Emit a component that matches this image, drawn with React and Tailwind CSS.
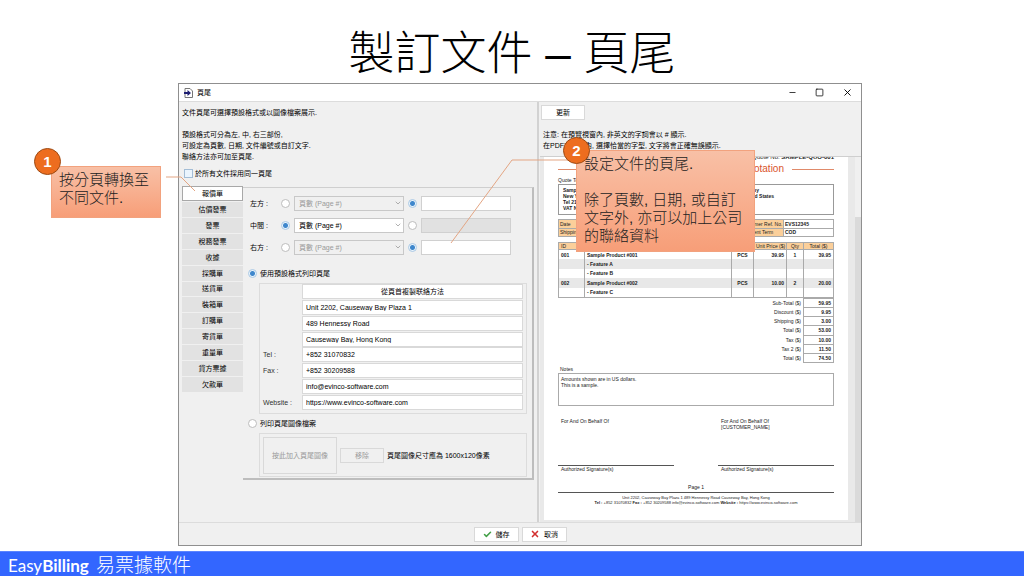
import React, { useState } from "react";
import { Check, ChevronDown, Minus, Square, X } from "lucide-react";

const tabs = [
  "報價單",
  "估價發票",
  "發票",
  "稅務發票",
  "收據",
  "採購單",
  "送貨單",
  "裝箱單",
  "訂購單",
  "寄貨單",
  "重量單",
  "貸方票據",
  "欠款單",
];

const positions = [
  { id: "left", label: "左方 :", mode: "text" },
  { id: "center", label: "中間 :", mode: "field" },
  { id: "right", label: "右方 :", mode: "text" },
];

const contactRows = [
  { id: "addr1", label: "", value: "Unit 2202, Causeway Bay Plaza 1" },
  { id: "addr2", label: "", value: "489 Hennessy Road" },
  { id: "addr3", label: "", value: "Causeway Bay, Hong Kong" },
  { id: "tel", label: "Tel :", value: "+852 31070832" },
  { id: "fax", label: "Fax :", value: "+852 30209588" },
  { id: "email", label: "", value: "info@evinco-software.com" },
  { id: "web", label: "Website :", value: "https://www.evinco-software.com" },
];

const items = [
  ["001", "Sample Product #001", "PCS", "39.95", "1", "39.95"],
  ["", "- Feature A", "", "", "", ""],
  ["", "- Feature B", "", "", "", ""],
  ["002", "Sample Product #002", "PCS", "10.00", "2", "20.00"],
  ["", "- Feature C", "", "", "", ""],
];

const totals = [
  ["Sub-Total ($)", "59.95"],
  ["Discount ($)", "9.95"],
  ["Shipping ($)", "3.00"],
  ["Total ($)", "53.00"],
  ["Tax ($)", "10.00"],
  ["Tax 2 ($)", "11.50"],
  ["Total ($)", "74.50"],
];

const Radio = ({ className = "", ...props }) => (
  <input
    type="radio"
    className={`appearance-none shrink-0 size-[9px] rounded-full border border-[#bdbdbd] bg-white checked:border-[#a9c8e4] checked:bg-[radial-gradient(circle,#3f87cc_0_2px,#eaf4fc_3px)] ${className}`}
    {...props}
  />
);

const PushButton = ({ className = "", children, ...props }) => (
  <button
    type="button"
    className={`flex items-center justify-center gap-1 border border-[#d9d9d9] bg-white disabled:bg-[#f0f0f0] disabled:text-[#9a9a9a] ${className}`}
    {...props}>
    {children}
  </button>
);

const PositionRow = ({ id, label, mode: initial }) => {
  const [mode, setMode] = useState(initial);

  return (
    <div className="flex items-center h-[22px]">
      <span id={`${id}-label`} className="w-[31px]">
        {label}
      </span>
      <Radio
        name={`${id}-mode`}
        aria-label={`${label} 頁數`}
        checked={mode === "field"}
        onChange={() => setMode("field")}
      />
      <div className="grid items-center w-[110px] ml-1">
        <select
          aria-labelledby={`${id}-label`}
          disabled={mode !== "field"}
          className="appearance-none col-start-1 row-start-1 h-[15px] w-full px-1 border border-[#c8c8c8] bg-white disabled:bg-[#f0f0f0] disabled:text-[#9a9a9a] disabled:opacity-100">
          <option>頁數 (Page #)</option>
        </select>
        <ChevronDown
          size={8}
          strokeWidth={2}
          className="col-start-1 row-start-1 justify-self-end mr-[2px] text-[#8a8a8a] pointer-events-none"
        />
      </div>
      <Radio
        name={`${id}-mode`}
        aria-label={`${label} 自訂文字`}
        className="ml-1"
        checked={mode === "text"}
        onChange={() => setMode("text")}
      />
      <input
        type="text"
        aria-label={`${label} 文字`}
        disabled={mode !== "text"}
        className="w-[90px] h-[15px] ml-1 px-1 border border-[#d0d0d0] bg-white disabled:bg-[#e1e1e1]"
      />
    </div>
  );
};

const FooterSettings = () => {
  const [format, setFormat] = useState("default");

  return (
    <div className="flex-1 min-w-0 h-[293px] mt-px pl-[5px] pr-1 pt-1 border-t border-t-[#cfcfcf] border-r-2 border-b-2 border-r-[#bdbdbd] border-b-[#bdbdbd]">
      <div className="pl-[2px]">
        {positions.map((p) => (
          <PositionRow key={p.id} {...p} />
        ))}
      </div>

      <label className="flex items-center gap-[3px] h-[11px] mt-[10px]">
        <Radio
          name="format"
          checked={format === "default"}
          onChange={() => setFormat("default")}
        />
        使用預設格式列印頁尾
      </label>
      <div className="grid auto-rows-fr h-[131px] mt-1 ml-[11px] mr-px border border-[#dcdcdc] pb-[3px] pr-[3px]">
        <div className="flex items-center">
          <PushButton className="flex-1 h-[15px] ml-[42px]">
            從頁首複製联絡方法
          </PushButton>
        </div>
        {contactRows.map((row) => (
          <div key={row.id} className="flex items-center">
            <label htmlFor={row.id} className="w-[42px] pl-[3px] text-[#333]">
              {row.label}
            </label>
            <input
              id={row.id}
              type="text"
              defaultValue={row.value}
              className="flex-1 min-w-0 h-[15px] px-[3px] border border-[#d9d9d9] bg-white"
            />
          </div>
        ))}
      </div>

      <label className="flex items-center gap-[3px] h-[11px] mt-1">
        <Radio
          name="format"
          checked={format === "image"}
          onChange={() => setFormat("image")}
        />
        列印頁尾圖像檔案
      </label>
      <div className="flex items-center gap-[3px] h-[44px] mt-1 ml-[11px] mr-px pl-[3px] border border-[#dcdcdc]">
        <PushButton disabled={format !== "image"} className="w-[74px] h-[37px]">
          按此加入頁尾圖像
        </PushButton>
        <PushButton disabled={format !== "image"} className="w-[44px] h-[15px]">
          移除
        </PushButton>
        <span>頁尾圖像尺寸應為 1600x120像素</span>
      </div>
    </div>
  );
};

const cellAlign = [
  "text-left",
  "text-left",
  "text-center",
  "text-right",
  "text-center",
  "text-right",
];

const InvoicePreview = () => (
  <div className="flex-1 min-w-0 h-[363px] bg-white px-[14px] text-[5px] leading-[6px] text-[#222] overflow-hidden">
    <p className="-mt-[3px] text-right text-[6px]">
      Quote No. <b>SAMPLE-QUO-001</b>
    </p>
    <div className="flex items-center gap-2 h-[14px] mt-[2px] text-[10px] text-[#d9542c]">
      <span className="flex-1 h-px bg-[#e08a6a]"></span>
      Quotation
      <span className="w-[42px] h-px bg-[#e08a6a]"></span>
    </div>
    <p className="mt-px">Quote To</p>
    <div className="grid grid-cols-[154px_1fr] h-[31px] mt-px px-1 pt-[2px] border border-[#999] font-bold">
      <p>
        Sample
        <br />
        New York
        <br />
        Tel 212
        <br />
        VAT No.
      </p>
      <p>
        Sample Company
        <br />
        New York, United States
      </p>
    </div>

    <table className="w-full h-[18px] mt-1 table-fixed border-collapse [&_th]:bg-[#fbcf9a] [&_th]:font-normal [&_th]:text-left [&_th]:whitespace-nowrap [&_th]:border [&_td]:border [&_th]:border-[#aaa] [&_td]:border-[#aaa] [&_td]:px-px [&_th]:px-px">
      <colgroup>
        <col className="w-[50px]" />
        <col />
        <col className="w-[44px]" />
        <col className="w-[50px]" />
      </colgroup>
      <tbody>
        <tr>
          <th scope="row">Date</th>
          <td></td>
          <th scope="row">Customer Ref. No.</th>
          <td className="font-bold">EVS12345</td>
        </tr>
        <tr>
          <th scope="row">Shipping</th>
          <td></td>
          <th scope="row">Payment Term</th>
          <td className="font-bold">COD</td>
        </tr>
      </tbody>
    </table>

    <table className="w-full h-[56px] mt-[5px] table-fixed border-collapse border border-[#aaa] [&_td]:border-x [&_td]:border-[#aaa] [&_td]:px-[2px] [&_th]:px-[2px]">
      <colgroup>
        <col className="w-[26px]" />
        <col />
        <col className="w-[22px]" />
        <col className="w-[33px]" />
        <col className="w-[17px]" />
        <col className="w-[30px]" />
      </colgroup>
      <thead>
        <tr className="bg-[#fbcf9a] [&_th]:border [&_th]:border-[#aaa] [&_th]:font-normal [&_th]:whitespace-nowrap">
          <th className="text-left">ID</th>
          <th className="text-left">Description</th>
          <th>Unit</th>
          <th>Unit Price ($)</th>
          <th>Qty</th>
          <th>Total ($)</th>
        </tr>
      </thead>
      <tbody>
        {items.map((row, i) => (
          <tr key={i} className="font-bold even:bg-[#e8e8e8]">
            {row.map((cell, c) => (
              <td key={c} className={`h-[9px] ${cellAlign[c]}`}>
                {cell}
              </td>
            ))}
          </tr>
        ))}
      </tbody>
    </table>
    <table className="w-full h-[65px] table-fixed border-collapse">
      <colgroup>
        <col />
        <col className="w-[30px]" />
      </colgroup>
      <tbody>
        {totals.map(([name, amount], i) => (
          <tr key={i}>
            <th scope="row" className="pr-[2px] text-right font-normal">
              {name}
            </th>
            <td className="px-[2px] border border-[#aaa] text-right font-bold">
              {amount}
            </td>
          </tr>
        ))}
      </tbody>
    </table>

    <p className="mt-[3px] pl-[2px]">Notes</p>
    <div className="h-[33px] mt-px p-[2px] border border-[#aaa]">
      Amounts shown are in US dollars.
      <br />
      This is a sample.
    </div>
    <div className="grid grid-cols-[116px_116px] justify-between mt-3">
      <div className="h-[48px] px-[3px] border-b border-[#555]">
        For And On Behalf Of
      </div>
      <div className="h-[48px] px-[3px] border-b border-[#555]">
        For And On Behalf Of
        <br />
        [CUSTOMER_NAME]
      </div>
      <p className="px-[3px]">Authorized Signature(s)</p>
      <p className="px-[3px]">Authorized Signature(s)</p>
    </div>
    <p className="mt-3 pb-[2px] border-b border-[#555] text-center">Page 1</p>
    <div className="mt-[2px] text-center text-[4px] leading-[5px] whitespace-nowrap">
      <p>
        Unit 2202, Causeway Bay Plaza 1 489 Hennessy Road Causeway Bay, Hong
        Kong
      </p>
      <p>
        <b>Tel :</b> +852 31070832 <b>Fax :</b> +852 30209588
        info@evinco-software.com <b>Website :</b>{" "}
        https://www.evinco-software.com
      </p>
    </div>
  </div>
);

const FooterDialog = () => {
  const [active, setActive] = useState(tabs[0]);

  return (
    <section className="flex flex-col ml-[178px] mr-[162px] border border-[#8f8f8f] bg-[#f0f0f0] text-[7px] leading-[11px] text-black">
      <header className="flex items-center h-[17px] pl-[5px] pr-2 bg-white">
        <svg viewBox="0 0 18 20" className="w-[9px] h-[10px]">
          <path d="M2 1h10l5 5v13H2z" fill="#fff" stroke="#777" strokeWidth="2" />
          <path d="M0 8h7V4l7 6-7 6v-4H0z" fill="#1d1d70" />
        </svg>
        <h2 className="flex-1 ml-1">頁尾</h2>
        <div className="flex gap-[18px]">
          <button type="button" aria-label="最小化">
            <Minus size={9} />
          </button>
          <button type="button" aria-label="最大化">
            <Square size={9} />
          </button>
          <button type="button" aria-label="關閉">
            <X size={11} />
          </button>
        </div>
      </header>

      <div className="flex h-[422px] border-y border-[#dcdcdc]">
        <div className="w-[360px] pl-[3px] pr-[3px] pt-[5px] border-r-2 border-[#d2d2d2]">
          <p>文件頁尾可選擇預設格式或以圖像檔案展示.</p>
          <p className="mt-[11px]">
            預設格式可分為左, 中, 右三部份,
            <br />
            可設定為頁數, 日期, 文件編號或自訂文字.
            <br />
            聯絡方法亦可加至頁尾.
          </p>
          <label className="flex items-center gap-[2px] mt-[6px] pl-[2px]">
            <input
              type="checkbox"
              className="appearance-none size-[9px] border border-[#a3bdd6] bg-[#eaf4fd] checked:bg-[#3f87cc]"
            />
            於所有文件採用同一頁尾
          </label>
          <div className="flex mt-[7px]">
            <div
              role="tablist"
              className="grid auto-rows-fr gap-px w-[61px] h-[206px]">
              {tabs.map((tab) => (
                <button
                  key={tab}
                  type="button"
                  role="tab"
                  aria-selected={tab === active}
                  onClick={() => setActive(tab)}
                  className={
                    tab === active
                      ? "bg-white border border-[#a8a8a8]"
                      : "bg-[#e2e2e2]"
                  }>
                  {tab}
                </button>
              ))}
            </div>
            <FooterSettings />
          </div>
        </div>

        <div className="flex-1 min-w-0 flex flex-col pl-px">
          <PushButton className="w-[44px] h-[15px] mt-[3px] ml-px">更新</PushButton>
          <p className="mt-[9px] ml-[3px]">
            注意: 在預覽視窗內, 非英文的字詞會以 # 顯示.
            <br />
            在PDF文件檔內, 選擇恰當的字型, 文字將會正確無誤顯示.
          </p>
          <div className="flex flex-1 min-h-0 mt-[5px] pl-1 border-t border-[#cfcfcf] bg-[#e9e9e9]">
            <InvoicePreview />
            <div className="w-[7px]"></div>
            <div className="w-[6px] bg-[#f0f0f0] pt-[60px]">
              <div className="h-full bg-[#dadada]"></div>
            </div>
          </div>
        </div>
      </div>

      <footer className="flex justify-center items-center gap-[3px] h-[22px]">
        <PushButton className="w-[45px] h-[15px]">
          <Check size={9} strokeWidth={4} className="text-[#43a047]" />
          儲存
        </PushButton>
        <PushButton className="w-[45px] h-[15px]">
          <X size={10} strokeWidth={4} className="text-[#d32f2f]" />
          取消
        </PushButton>
      </footer>
    </section>
  );
};

const Callout = ({ number, className, badge, children }) => (
  <div
    className={`absolute pl-[7px] pt-1 bg-linear-to-b from-[#f8c0a6] to-[#f79e78] border border-[#f2a27e] text-[15px] leading-[18px] font-light text-[#222] ${className}`}>
    <span
      className={`absolute flex items-center justify-center size-[27px] rounded-full border border-[#9c4a14] bg-[#ed6d1f] text-white font-bold ${badge}`}>
      {number}
    </span>
    {children}
  </div>
);

export default function App() {
  return (
    <main className="relative flex flex-col min-h-screen bg-white font-['Liberation_Sans','Noto_Sans_CJK_TC',sans-serif]">
      <h1 className="h-[83px] pt-[22px] text-center text-[46px] leading-[62px] font-light text-black">
        製訂文件 – 頁尾
      </h1>
      <FooterDialog />
      <footer className="h-[25px] mt-auto pl-2 bg-[#3366ff] border-t border-[#5b84ff] text-white text-[19px] leading-[25px] font-light font-['Lato','Noto_Sans_CJK_TC',sans-serif]">
        <span className="mr-[2px] text-[17px] font-normal">
          Easy<b>Billing</b>
        </span>{" "}
        易票據軟件
      </footer>

      <svg
        viewBox="0 0 1024 576"
        className="absolute left-0 top-0 w-[1024px] h-[576px] pointer-events-none"
        fill="none"
        stroke="#e3a583">
        <path d="M166 177h15l14 14" />
        <path d="M573 160h-61l-61 83" />
      </svg>
      <Callout
        number="1"
        className="left-[51px] top-[166px] w-[110px] h-[52px]"
        badge="-left-[18px] -top-[19px]">
        按分頁轉換至
        <br />
        不同文件.
      </Callout>
      <Callout
        number="2"
        className="left-[576px] top-[150px] w-[179px] h-[102px]"
        badge="-left-[14px] -top-[14px]">
        設定文件的頁尾.
        <br />
        <br />
        除了頁數, 日期, 或自訂
        <br />
        文字外, 亦可以加上公司
        <br />
        的聯絡資料
      </Callout>
    </main>
  );
}
